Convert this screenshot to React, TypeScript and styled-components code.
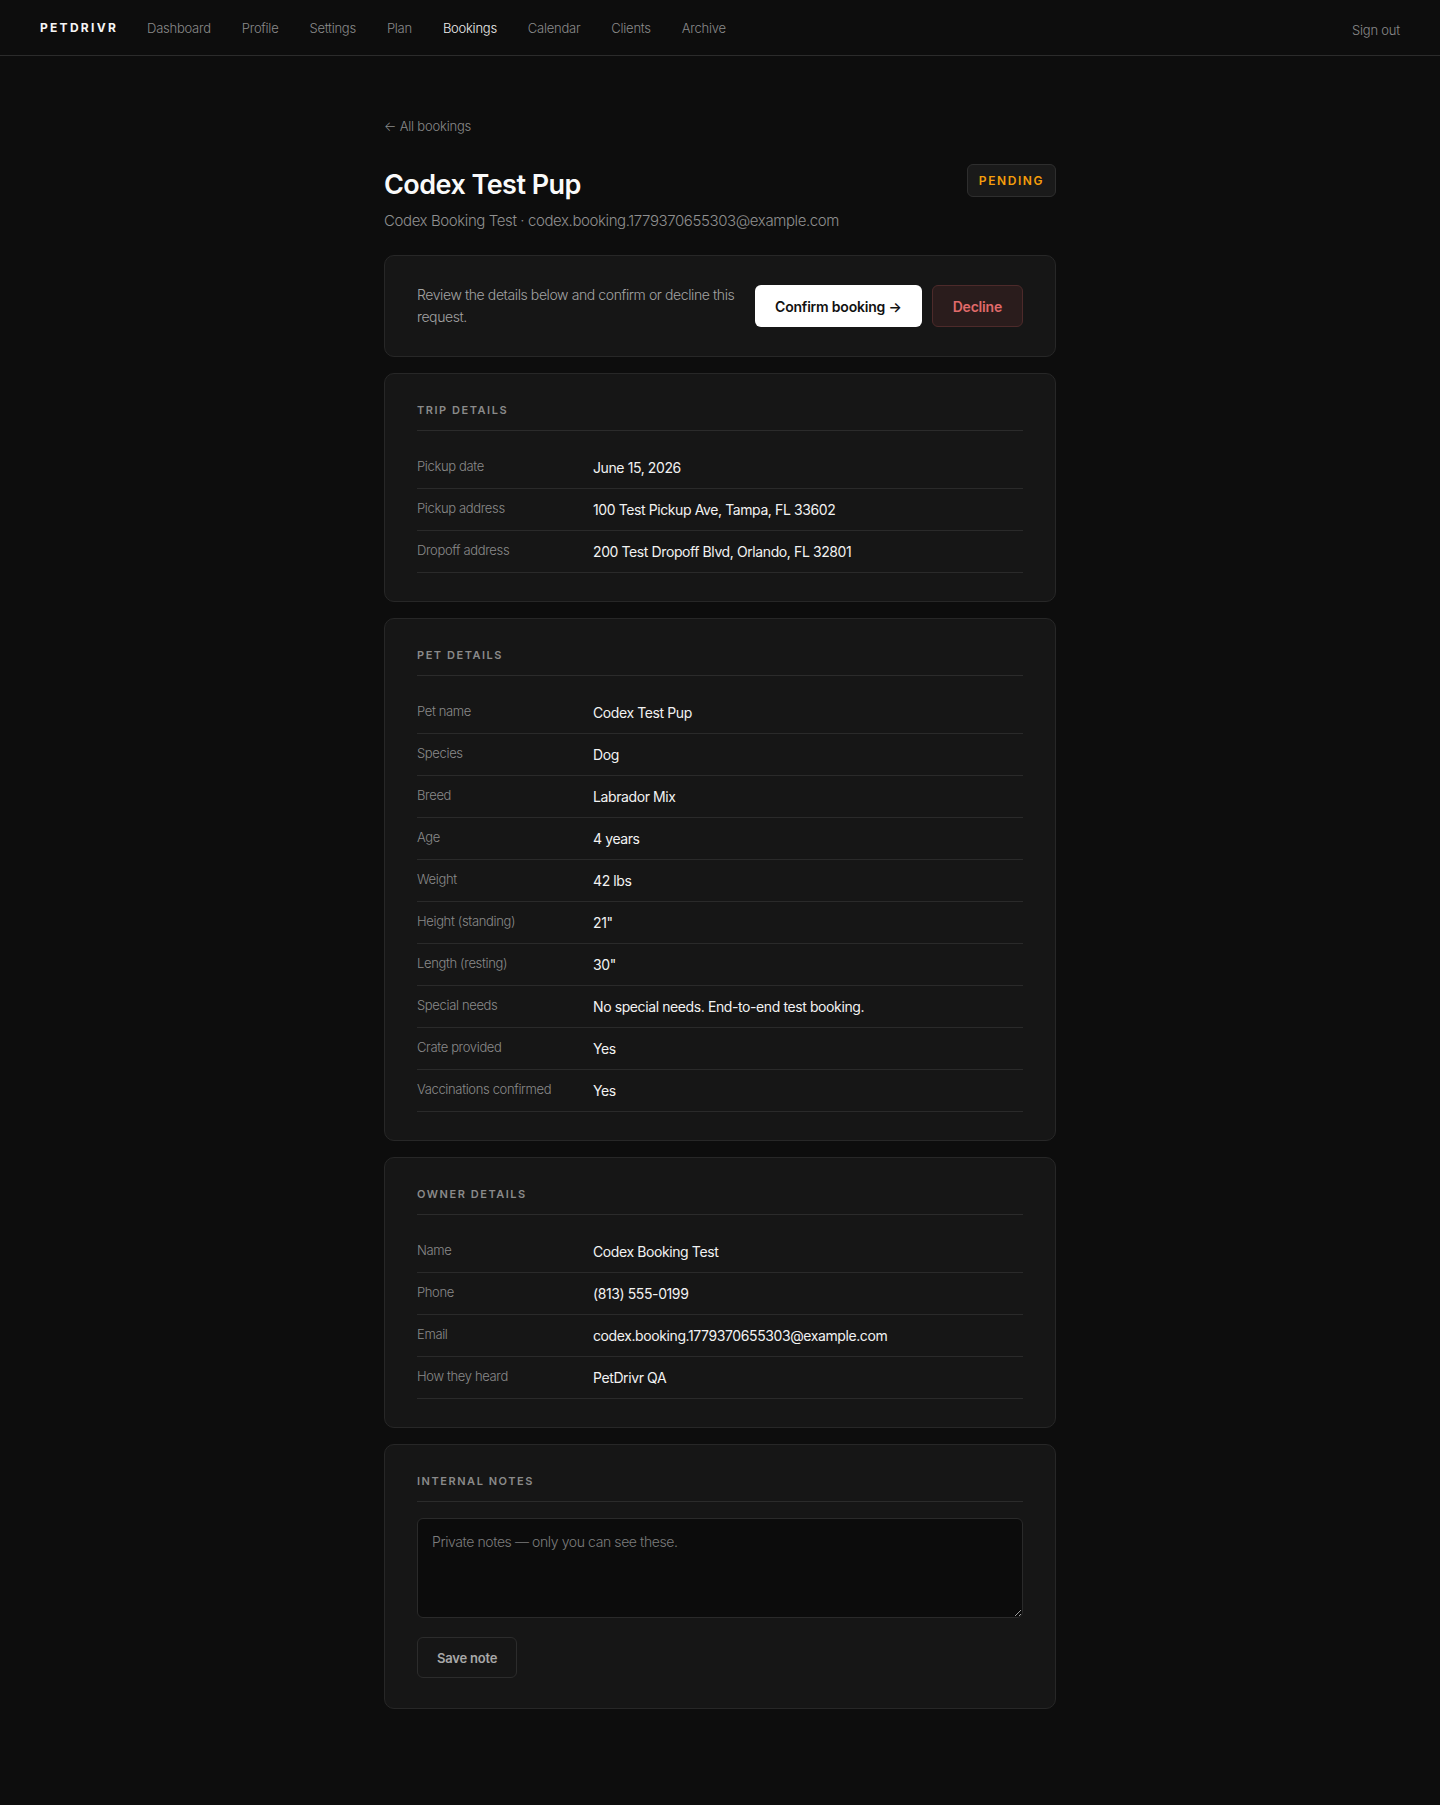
import React from 'react'
import styled, { createGlobalStyle } from 'styled-components'

type Row = { label: string; value: string }

const trip: Row[] = [
  { label: 'Pickup date', value: 'June 15, 2026' },
  { label: 'Pickup address', value: '100 Test Pickup Ave, Tampa, FL 33602' },
  { label: 'Dropoff address', value: '200 Test Dropoff Blvd, Orlando, FL 32801' },
]

const pet: Row[] = [
  { label: 'Pet name', value: 'Codex Test Pup' },
  { label: 'Species', value: 'Dog' },
  { label: 'Breed', value: 'Labrador Mix' },
  { label: 'Age', value: '4 years' },
  { label: 'Weight', value: '42 lbs' },
  { label: 'Height (standing)', value: '21"' },
  { label: 'Length (resting)', value: '30"' },
  { label: 'Special needs', value: 'No special needs. End-to-end test booking.' },
  { label: 'Crate provided', value: 'Yes' },
  { label: 'Vaccinations confirmed', value: 'Yes' },
]

const owner: Row[] = [
  { label: 'Name', value: 'Codex Booking Test' },
  { label: 'Phone', value: '(813) 555-0199' },
  { label: 'Email', value: 'codex.booking.1779370655303@example.com' },
  { label: 'How they heard', value: 'PetDrivr QA' },
]

const navLinks = ['Dashboard', 'Profile', 'Settings', 'Plan', 'Bookings', 'Calendar', 'Clients', 'Archive']

const DetailCard: React.FC<{ title: string; rows: Row[] }> = ({ title, rows }) => (
  <Card>
    <CardTitle>{title}</CardTitle>
    <List>
      {rows.map(({ label, value }) => (
        <ListRow key={label}>
          <Label>{label}</Label>
          <Value>{value}</Value>
        </ListRow>
      ))}
    </List>
  </Card>
)

const App: React.FC = () => (
  <>
    <GlobalStyle />
    <Page>
      <TopNav>
        <Logo>PETDRIVR</Logo>
        <NavList>
          {navLinks.map((name) => (
            <NavLink key={name} $active={name === 'Bookings'}>
              {name}
            </NavLink>
          ))}
        </NavList>
        <SignOut type="button">Sign out</SignOut>
      </TopNav>

      <Main>
        <BackLink href="#">← All bookings</BackLink>

        <Header>
          <div>
            <Title>Codex Test Pup</Title>
            <Subtitle>Codex Booking Test · codex.booking.1779370655303@example.com</Subtitle>
          </div>
          <Badge>PENDING</Badge>
        </Header>

        <ActionCard>
          <ActionText>Review the details below and confirm or decline this request.</ActionText>
          <ActionButtons>
            <ConfirmButton type="button">Confirm booking →</ConfirmButton>
            <DeclineButton type="button">Decline</DeclineButton>
          </ActionButtons>
        </ActionCard>

        <DetailCard title="Trip details" rows={trip} />
        <DetailCard title="Pet details" rows={pet} />
        <DetailCard title="Owner details" rows={owner} />

        <NotesCard>
          <CardTitle>Internal notes</CardTitle>
          <NotesField placeholder="Private notes — only you can see these." />
          <SaveButton type="button">Save note</SaveButton>
        </NotesCard>
      </Main>
    </Page>
  </>
)

const GlobalStyle = createGlobalStyle`
  * { box-sizing: border-box; }
  body {
    margin: 0;
    background: #0d0d0d;
    color: #f2f2f2;
    font-family: Inter, 'Noto Sans', sans-serif;
    -webkit-font-smoothing: antialiased;
  }
`

const Page = styled.div`
  min-height: 1805px;
  background: #0d0d0d;
`

const TopNav = styled.header`
  display: flex;
  align-items: center;
  height: 56px;
  padding: 0 40px;
  border-bottom: 1px solid #2b2b2b;
`

const Logo = styled.div`
  font-size: 12px;
  font-weight: 700;
  letter-spacing: 0.19em;
  color: #f5f5f5;
  margin-right: 29px;
`

const NavList = styled.nav`
  display: flex;
  gap: 31px;
  flex: 1;
`

const NavLink = styled.a<{ $active?: boolean }>`
  font-size: 13px;
  font-weight: 300;
  letter-spacing: -0.25px;
  color: ${({ $active }) => ($active ? '#ededed' : '#8a8a8a')};
  text-decoration: none;
  cursor: pointer;
`

const SignOut = styled.button`
  background: none;
  border: 0;
  padding: 0;
  margin-top: 4px;
  font-family: inherit;
  font-size: 13px;
  font-weight: 300;
  letter-spacing: -0.2px;
  color: #8a8a8a;
`

const Main = styled.main`
  max-width: 672px;
  margin: 0 auto;
  padding: 62px 0 120px;
  display: flex;
  flex-direction: column;
  gap: 16px;
`

const BackLink = styled.a`
  font-size: 13px;
  font-weight: 300;
  letter-spacing: -0.2px;
  color: #8a8a8a;
  text-decoration: none;
  margin-bottom: 18px;
`

const Header = styled.div`
  display: flex;
  justify-content: space-between;
  align-items: flex-start;
  margin-bottom: 9px;
`

const Title = styled.h1`
  margin: 0;
  font-size: 27px;
  font-weight: 600;
  letter-spacing: -0.02em;
  color: #fafafa;
`

const Subtitle = styled.p`
  margin: 10px 0 0;
  font-size: 15px;
  font-weight: 300;
  letter-spacing: -0.4px;
  color: #8f8f8f;
`

const Badge = styled.span`
  margin-top: -4px;
  padding: 8px 11px;
  border: 1px solid #2e2e2e;
  border-radius: 6px;
  background: #1a1a1a;
  color: #f59e0b;
  font-size: 12px;
  font-weight: 600;
  letter-spacing: 0.13em;
`

const Card = styled.section`
  background: #161616;
  border: 1px solid #272727;
  border-radius: 10px;
  padding: 28px 32px;
`

const NotesCard = styled(Card)`
  display: flex;
  flex-direction: column;
  padding-bottom: 30px;
`

const ActionCard = styled(Card)`
  display: flex;
  align-items: center;
  gap: 16px;
`

const ActionText = styled.p`
  flex: 1;
  margin: 0;
  font-size: 14px;
  font-weight: 300;
  line-height: 22px;
  letter-spacing: -0.4px;
  color: #a3a3a3;
`

const ActionButtons = styled.div`
  display: flex;
  gap: 10px;
`

const ConfirmButton = styled.button`
  height: 42px;
  padding: 0 20px;
  border: 0;
  border-radius: 6px;
  background: #ffffff;
  color: #111;
  font-family: inherit;
  font-size: 14px;
  font-weight: 600;
  letter-spacing: -0.2px;
`

const DeclineButton = styled.button`
  height: 42px;
  padding: 0 20px;
  border: 1px solid #4d2a2a;
  border-radius: 6px;
  background: #2a1c1c;
  color: #e06a6a;
  font-family: inherit;
  font-size: 14px;
  font-weight: 600;
  letter-spacing: -0.2px;
`

const CardTitle = styled.h2`
  margin: 0 0 16px;
  padding-bottom: 12px;
  border-bottom: 1px solid #2b2b2b;
  font-size: 11px;
  line-height: 16px;
  font-weight: 600;
  letter-spacing: 0.14em;
  text-transform: uppercase;
  color: #8a8a8a;
`

const List = styled.dl`
  margin: 0;
`

const ListRow = styled.div`
  display: grid;
  grid-template-columns: 176px 1fr;
  align-items: center;
  padding: 12px 0;
  border-bottom: 1px solid #2a2a2a;
`

const Label = styled.dt`
  font-size: 13px;
  font-weight: 300;
  line-height: 17px;
  letter-spacing: -0.35px;
  color: #8a8a8a;
  margin-top: -2px;
`

const Value = styled.dd`
  margin: 0;
  font-size: 14px;
  line-height: 17px;
  letter-spacing: -0.4px;
  color: #f2f2f2;
`

const NotesField = styled.textarea`
  display: block;
  width: 100%;
  height: 100px;
  padding: 14px;
  border: 1px solid #2a2a2a;
  border-radius: 6px;
  background: #0c0c0c;
  color: #eee;
  font-family: inherit;
  font-size: 14px;
  font-weight: 300;
  letter-spacing: -0.4px;
  resize: vertical;

  &::placeholder {
    color: #7c7c7c;
  }
`

const SaveButton = styled.button`
  align-self: flex-start;
  margin-top: 19px;
  height: 41px;
  padding: 0 19px;
  border: 1px solid #2c2c2c;
  border-radius: 6px;
  background: #161616;
  color: #a8a8a8;
  font-family: inherit;
  font-size: 13px;
  font-weight: 600;
  letter-spacing: -0.2px;
`

export default App
